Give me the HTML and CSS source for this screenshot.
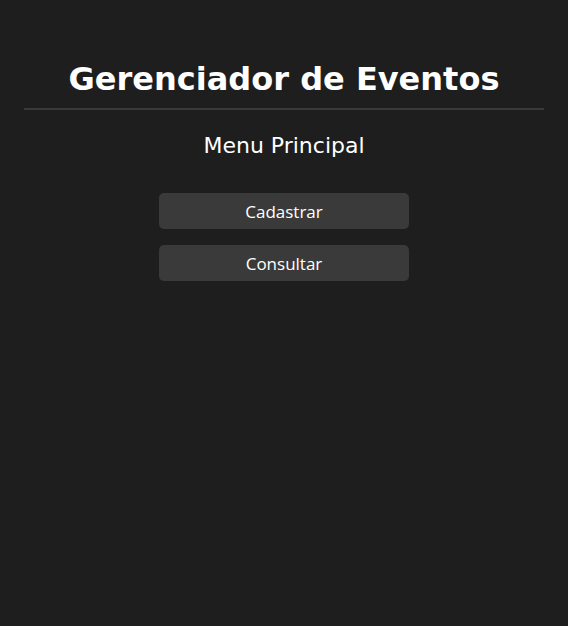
FILE: index.html
```html
<!DOCTYPE html>
<html lang="pt">
<head>
<meta charset="utf-8">
<title>Gerenciador de Eventos</title>
<link rel="stylesheet" href="styles.css">
</head>
<body>
<div class="app">
  <header class="header">
    <h1 class="title">Gerenciador de Eventos</h1>
  </header>
  <h2 class="subtitle">Menu Principal</h2>
  <nav class="menu">
    <button class="btn">Cadastrar</button>
    <button class="btn">Consultar</button>
  </nav>
</div>
</body>
</html>
```
FILE: styles.css
```css
html, body {
  margin: 0;
  padding: 0;
  background: #1e1e1e;
  color: #ffffff;
  font-family: "DejaVu Sans", sans-serif;
}
.app {
  padding: 0 24px;
}
.header {
  border-bottom: 2px solid #3a3a3a;
  padding-top: 60px;
  padding-bottom: 10px;
}
.title {
  margin: 0;
  text-align: center;
  font-size: 32px;
  font-weight: bold;
  line-height: 38px;
}
.subtitle {
  margin: 23px 0 0;
  text-align: center;
  font-size: 22px;
  font-weight: normal;
  line-height: 26px;
}
.menu {
  display: flex;
  flex-direction: column;
  align-items: center;
  gap: 16px;
  margin-top: 34px;
}
.btn {
  width: 250px;
  height: 36px;
  border: none;
  border-radius: 5px;
  background: #3a3a3a;
  color: #ffffff;
  font-family: "Open Sans", sans-serif;
  font-size: 17px;
  cursor: pointer;
}
```
